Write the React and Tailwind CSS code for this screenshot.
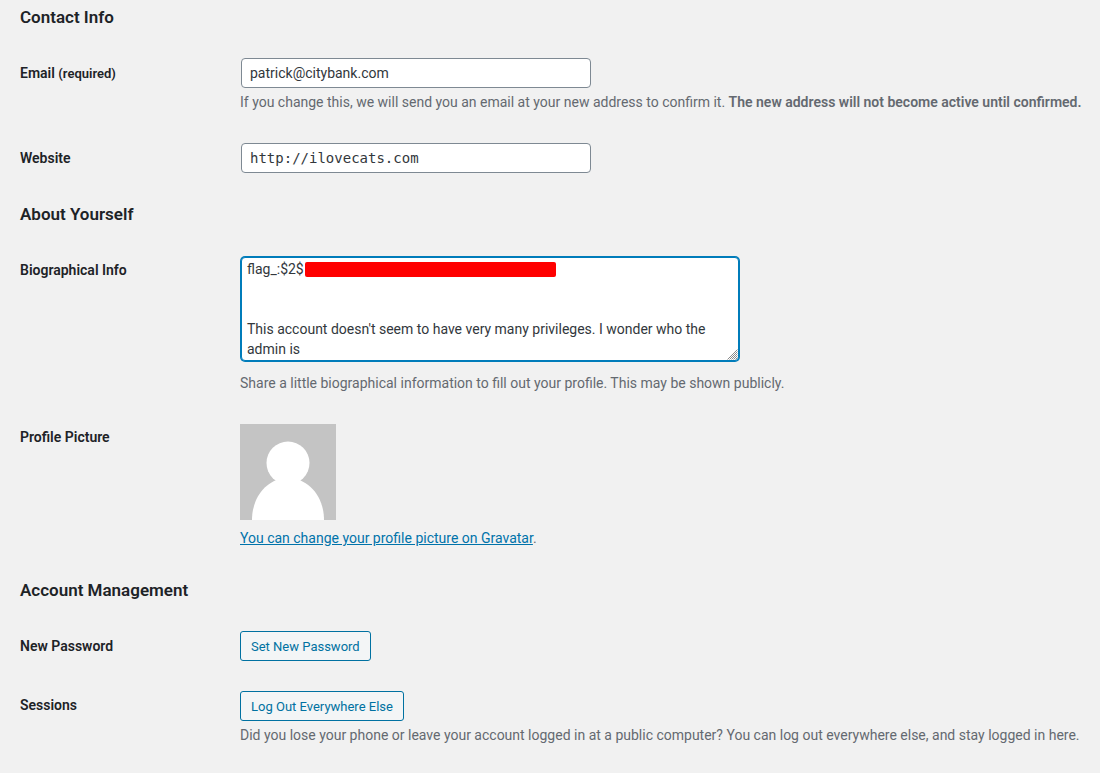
const labelCls = "w-[220px] shrink-0 text-[14px] leading-5 font-semibold text-[#1d2327]";
const headCls = "h-[34px] pt-[2px] flex items-center text-[17px] font-semibold text-[#1d2327]";
const descCls = "text-[14px] leading-5 text-[#646970]";
const inputCls = "ml-px block w-[350px] h-[30px] border border-[#7e8993] rounded-[4px] bg-white px-2 text-[14px] text-[#32373c] outline-none";
const btnCls = "block h-[30px] pt-[2px] px-[10px] border border-[#0071a1] rounded-[3px] bg-[#f3f5f6] text-[13px] text-[#0071a1]";

const bio = "flag_:$2$\n\n\nThis account doesn't seem to have very many privileges. I wonder who the admin is";

export default function App() {
  return (
    <div className="h-[773px] overflow-hidden bg-[#f1f1f1] pl-5 font-['Roboto',sans-serif]">
      <h2 className={headCls}>Contact Info</h2>

      <div className="mt-6 flex">
        <label className={`${labelCls} pt-[5px]`}>
          Email <span className="text-[13px]">(required)</span>
        </label>
        <div>
          <input className={inputCls} readOnly value="patrick@citybank.com" />
          <p className={`${descCls} mt-1 whitespace-nowrap`}>
            If you change this, we will send you an email at your new address to confirm it.{" "}
            <strong className="font-semibold">The new address will not become active until confirmed.</strong>
          </p>
        </div>
      </div>

      <div className="mt-[31px] flex">
        <label className={`${labelCls} pt-[5px]`}>Website</label>
        <input className={`${inputCls} font-['DejaVu_Sans_Mono',monospace]`} readOnly value="http://ilovecats.com" />
      </div>

      <h2 className={`${headCls} mt-6`}>About Yourself</h2>

      <div className="mt-[25px] flex">
        <label className={`${labelCls} pt-1`}>Biographical Info</label>
        <div>
          <div className="relative ml-px w-[498px]">
            <textarea
              readOnly
              value={bio}
              className="block w-[498px] h-[104px] mt-px border border-[#007cba] rounded-[4px] bg-white pt-px px-[5px] text-[14px] leading-5 text-[#32373c] shadow-[0_0_0_1px_#007cba] outline-none resize-none"
            />
            <div className="absolute left-[64px] top-[5px] w-[251px] h-[15px] rounded-[2px] bg-[#ff0000]" />
            <svg width="11" height="11" viewBox="0 0 11 11" className="absolute right-px bottom-px" stroke="#8a8a8a" strokeWidth="1">
              <path d="M0.5 10.5L10.5 0.5M2.5 10.5L10.5 2.5M4.5 10.5L10.5 4.5M6.5 10.5L10.5 6.5M8.5 10.5L10.5 8.5" />
            </svg>
          </div>
          <p className={`${descCls} mt-3`}>
            Share a little biographical information to fill out your profile. This may be shown publicly.
          </p>
        </div>
      </div>

      <div className="mt-[31px] flex">
        <label className={`${labelCls} pt-[3px]`}>Profile Picture</label>
        <div>
          <svg width="96" height="96" viewBox="0 0 96 96" className="block">
            <rect width="96" height="96" fill="#c4c4c4" />
            <circle cx="48" cy="39" r="21.5" fill="#ffffff" />
            <path d="M12 96C12 72 28 54 48 54C68 54 84 72 84 96Z" fill="#ffffff" />
          </svg>
          <p className={`${descCls} mt-2`}>
            <a className="text-[#0073aa] underline">You can change your profile picture on Gravatar</a>.
          </p>
        </div>
      </div>

      <h2 className={`${headCls} mt-[25px]`}>Account Management</h2>

      <div className="mt-6 flex">
        <label className={`${labelCls} pt-[5px]`}>New Password</label>
        <button className={btnCls}>Set New Password</button>
      </div>

      <div className="mt-[30px] flex">
        <label className={`${labelCls} pt-1`}>Sessions</label>
        <div>
          <button className={btnCls}>Log Out Everywhere Else</button>
          <p className={`${descCls} mt-1 whitespace-nowrap`}>
            Did you lose your phone or leave your account logged in at a public computer? You can log out everywhere else, and stay logged in here.
          </p>
        </div>
      </div>
    </div>
  );
}
